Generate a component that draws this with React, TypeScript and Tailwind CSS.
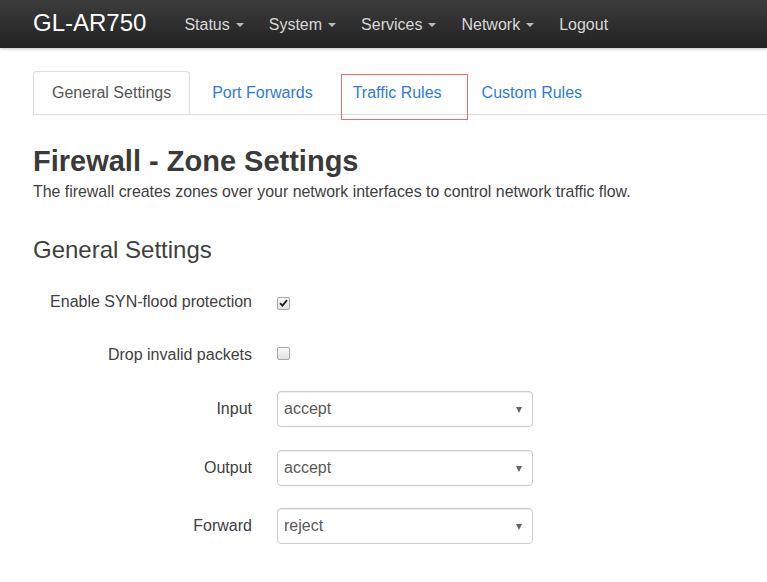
const navItems = ['Status', 'System', 'Services', 'Network'];

function Caret() {
  return (
    <span className="ml-[6px] inline-block w-0 h-0 border-x-[4px] border-x-transparent border-t-[4px] border-t-[#bbb] align-middle" />
  );
}

function Select({ value }: { value: string }) {
  return (
    <div className="relative w-[256px] h-[36px] rounded-[4px] border border-[#ccc] bg-white shadow-[inset_0_1px_1px_rgba(0,0,0,0.075)] flex items-center px-[6px] text-[16px] text-[#5a5a5a]">
      <span>{value}</span>
      <span className="absolute right-[10px] top-[15px] w-0 h-0 border-x-[3.5px] border-x-transparent border-t-[6px] border-t-[#666]" />
    </div>
  );
}

function Checkbox({ checked }: { checked?: boolean }) {
  return (
    <span className="inline-flex items-center justify-center w-[13px] h-[13px] rounded-[2px] border border-[#a9a9a9] bg-gradient-to-b from-[#fafafa] to-[#e2e2e2]">
      {checked && (
        <svg width="9" height="8" viewBox="0 0 9 8">
          <path d="M1 4.2 L3.4 6.6 L8 1.2" fill="none" stroke="#222" strokeWidth="1.8" />
        </svg>
      )}
    </span>
  );
}

export default function App() {
  return (
    <div className="min-h-[582px] bg-white font-['Liberation_Sans',Arial,sans-serif] text-[#404040]">
      <div className="h-[48px] bg-gradient-to-b from-[#3c3c3c] to-[#222] shadow-[0_1px_3px_rgba(0,0,0,0.25)] flex items-center pl-[33px]">
        <span className="text-[24px] text-white leading-none mb-[3px]">GL-AR750</span>
        <nav className="flex items-center ml-[38px] gap-[25px] text-[16px] text-[#d8d8d8] leading-none mt-[1px]">
          {navItems.map((n) => (
            <span key={n} className="flex items-center">
              {n}
              <Caret />
            </span>
          ))}
          <span>Logout</span>
        </nav>
      </div>

      <div className="pl-[33px]">
        <div className="mt-[23px] flex border-b border-[#ddd] text-[16px]">
          <div className="h-[43px] pt-[1px] px-[18px] flex items-center border border-[#ddd] border-b-white -mb-px rounded-t-[4px] text-[#555] bg-white">
            General Settings
          </div>
          <div className="h-[43px] pt-[1px] ml-[4px] px-[18px] flex items-center text-[#2f7ae0]">Port Forwards</div>
          <div className="relative h-[43px] pt-[1px] ml-[4px] px-[18px] flex items-center text-[#2f7ae0]">
            Traffic Rules
            <span className="absolute left-[6px] top-[3px] w-[127px] h-[46px] border border-[#f06a6a]" />
          </div>
          <div className="h-[43px] pt-[1px] ml-[4px] px-[18px] flex items-center text-[#2f7ae0]">Custom Rules</div>
        </div>

        <h1 className="mt-[29px] text-[29px] font-bold leading-[34px] text-[#3a3a3a]">Firewall - Zone Settings</h1>
        <p className="mt-[4px] text-[15.9px] leading-[20px] text-[#404040]">
          The firewall creates zones over your network interfaces to control network traffic flow.
        </p>

        <h3 className="mt-[34px] text-[24px] leading-[28px] text-[#404040]">General Settings</h3>

        <div className="mt-[20px] text-[16px] text-[#404040]">
          <div className="flex items-center h-[36px]">
            <label className="w-[219px] text-right">Enable SYN-flood protection</label>
            <div className="ml-[25px]"><Checkbox checked /></div>
          </div>
          <div className="flex items-center h-[36px] mt-[17px]">
            <label className="w-[219px] text-right">Drop invalid packets</label>
            <div className="ml-[25px]"><Checkbox /></div>
          </div>
          <div className="flex items-center h-[36px] mt-[18px]">
            <label className="w-[219px] text-right">Input</label>
            <div className="ml-[25px]"><Select value="accept" /></div>
          </div>
          <div className="flex items-center h-[36px] mt-[23px]">
            <label className="w-[219px] text-right">Output</label>
            <div className="ml-[25px]"><Select value="accept" /></div>
          </div>
          <div className="flex items-center h-[36px] mt-[22px]">
            <label className="w-[219px] text-right">Forward</label>
            <div className="ml-[25px]"><Select value="reject" /></div>
          </div>
        </div>
      </div>
    </div>
  );
}
